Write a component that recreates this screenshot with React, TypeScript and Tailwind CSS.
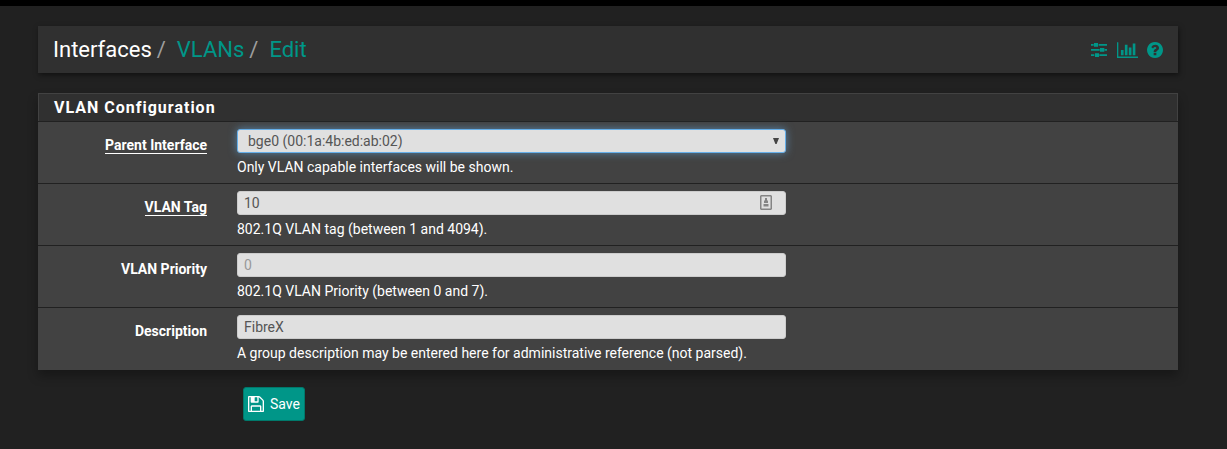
import React from "react";

function SlidersIcon() {
  return (
    <svg viewBox="0 0 48 42" className="h-[14px] w-4" fill="currentColor" aria-hidden="true">
      <path d="M0 3h8v5H0zM23 3h25v5H23zM9 0h12v11H9zM0 18h26v5H0zM41 18h7v5h-7zM27 15h13v11H27zM0 34h10v5H0zM25 34h23v5H25zM12 31h12v11H12z" />
    </svg>
  );
}

function BarChartIcon() {
  return (
    <svg viewBox="0 128 2048 1536" className="h-4 w-[21px]" fill="currentColor" aria-hidden="true">
      <path d="M640 896v512h-256v-512h256zm384-512v1024h-256v-1024h256zm1024 1152v128h-2048v-1536h128v1408h1920zm-640-896v768h-256v-768h256zm384-384v1152h-256v-1152h256z" />
    </svg>
  );
}

function HelpIcon() {
  return (
    <svg viewBox="128 128 1536 1536" className="size-4" fill="currentColor" aria-hidden="true">
      <path d="M1024 1376v-192q0-14-9-23t-23-9h-192q-14 0-23 9t-9 23v192q0 14 9 23t23 9h192q14 0 23-9t9-23zm256-672q0-88-55.5-163t-138.5-116-170-41q-243 0-371 213-15 24 8 42l132 100q7 6 19 6 16 0 25-12 53-68 86-92 34-24 86-24 48 0 85.5 26t37.5 59q0 38-20 61t-68 45q-63 28-115.5 86.5t-52.5 125.5v36q0 14 9 23t23 9h192q14 0 23-9t9-23q0-19 21.5-49.5t54.5-49.5q32-18 49-28.5t46-35 44.5-48 28-60.5 12.5-81zm384 192q0 209-103 385.5t-279.5 279.5-385.5 103-385.5-103-279.5-279.5-103-385.5 103-385.5 279.5-279.5 385.5-103 385.5 103 279.5 279.5 103 385.5z" />
    </svg>
  );
}

function SaveIcon() {
  return (
    <svg viewBox="128 128 1536 1536" className="size-4" fill="currentColor" aria-hidden="true">
      <path d="M512 1536h768v-384h-768v384zm896 0h128v-896q0-14-10-38.5t-20-34.5l-281-281q-10-10-34-20t-39-10v416q0 40-28 68t-68 28h-576q-40 0-68-28t-28-68v-416h-128v1280h128v-416q0-40 28-68t68-28h832q40 0 68 28t28 68v416zm-384-928v-320q0-13-9.5-22.5t-22.5-9.5h-192q-13 0-22.5 9.5t-9.5 22.5v320q0 13 9.5 22.5t22.5 9.5h192q13 0 22.5-9.5t9.5-22.5zm640 32v928q0 40-28 68t-68 28h-1344q-40 0-68-28t-28-68v-1344q0-40 28-68t68-28h928q40 0 88 20t76 48l280 280q28 28 48 76t20 88z" />
    </svg>
  );
}

const control =
  "block h-6 w-full appearance-none rounded-[3px] border border-[#cccccc] bg-[#e0e0e0] text-sm leading-5 text-[#555555] outline-none placeholder:text-[#999999]";

type RowProps = {
  id: string;
  label: string;
  help: string;
  required?: boolean;
  children: React.ReactNode;
};

function Row({ id, label, help, required, children }: RowProps) {
  return (
    <div className="flex gap-[30px] border-b border-[#212121] px-px pt-[7px] pb-1.5 last:border-b-0 last:pb-[7px]">
      <div className="flex w-[168px] shrink-0 items-start justify-end pt-2">
        <label
          htmlFor={id}
          className={
            required
              ? "border-b border-white text-sm leading-4 font-bold"
              : "text-sm leading-4 font-bold"
          }
        >
          {label}
        </label>
      </div>
      <div className="max-w-[549px] min-w-0 flex-1">
        <div className="relative">{children}</div>
        <p className="pt-1 text-sm leading-5">{help}</p>
      </div>
    </div>
  );
}

export default function App() {
  return (
    <div className="min-h-screen border-t-[6px] border-black bg-[#212121] pt-5 pr-[49px] pb-7 pl-[38px] font-[Roboto,sans-serif] text-white">
      <header className="flex h-[47px] items-center justify-between bg-[#303030] px-[15px] shadow-[1px_2px_5px_rgba(0,0,0,0.5)]">
        <nav aria-label="Breadcrumb">
          <ol className="flex text-[22px] leading-6">
            <li>
              Interfaces<span className="px-[5px] text-[#9e9e9e]">/</span>
            </li>
            <li className="pl-1.5">
              <a href="#vlans" className="text-[#009688]">VLANs</a>
              <span className="px-[5px] text-[#9e9e9e]">/</span>
            </li>
            <li className="pl-1.5">
              <a href="#edit" className="text-[#009688]">Edit</a>
            </li>
          </ol>
        </nav>
        <div className="flex items-center gap-[9px] text-[#009688]">
          <a href="#settings" aria-label="Related settings" className="pr-px"><SlidersIcon /></a>
          <a href="#status" aria-label="Related status"><BarChartIcon /></a>
          <a href="#help" aria-label="Help"><HelpIcon /></a>
        </div>
      </header>

      <form onSubmit={(e) => e.preventDefault()}>
        <section className="mt-5 bg-[#424242] shadow-[0_6px_10px_rgba(0,0,0,0.3)]">
          <h2 className="border border-b-0 border-[#424242] bg-[#303030] px-[15px] pt-px text-base leading-[26px] font-bold tracking-[1px]">
            VLAN Configuration
          </h2>
          <div className="border-t border-[#212121]">
            <Row id="parent" label="Parent Interface" help="Only VLAN capable interfaces will be shown." required>
              <select
                id="parent"
                className="block h-6 w-full appearance-none rounded-[3px] border border-[#66afe9] bg-[#e0e0e0] px-2.5 text-sm leading-5 text-[#555555] shadow-[0_0_8px_rgba(102,175,233,0.6)] outline-none"
              >
                <option>bge0 (00:1a:4b:ed:ab:02)</option>
              </select>
              <svg viewBox="0 0 6 6" className="pointer-events-none absolute top-[9px] right-[7px] size-1.5" fill="#444444" aria-hidden="true">
                <path d="M0 0h6L3.6 6H2.4z" />
              </svg>
            </Row>
            <Row id="tag" label="VLAN Tag" help="802.1Q VLAN tag (between 1 and 4094)." required>
              <input id="tag" type="text" defaultValue="10" className={`${control} px-1.5`} />
              <svg viewBox="0 0 12 15" className="pointer-events-none absolute top-1 right-3.5 h-[15px] w-3" fill="#858585" aria-hidden="true">
                <path fillRule="evenodd" d="M1 0h10l1 1v13l-1 1H1l-1-1V1zM1.5 1.5v12h9v-12z" />
                <path d="M5 3h2v2l1 1v2H4V6l1-1zM3.5 9h5v2.5h-5z" />
              </svg>
            </Row>
            <Row id="priority" label="VLAN Priority" help="802.1Q VLAN Priority (between 0 and 7).">
              <input id="priority" type="text" placeholder="0" className={`${control} px-1.5`} />
            </Row>
            <Row
              id="description"
              label="Description"
              help="A group description may be entered here for administrative reference (not parsed)."
            >
              <input id="description" type="text" defaultValue="FibreX" className={`${control} px-1.5`} />
            </Row>
          </div>
        </section>

        <button
          type="submit"
          className="mt-[17px] ml-[205px] flex h-[34px] items-center gap-1.5 rounded-[3px] border border-[#00796b] bg-[#009688] px-1 text-sm"
        >
          <SaveIcon />
          Save
        </button>
      </form>
    </div>
  );
}
